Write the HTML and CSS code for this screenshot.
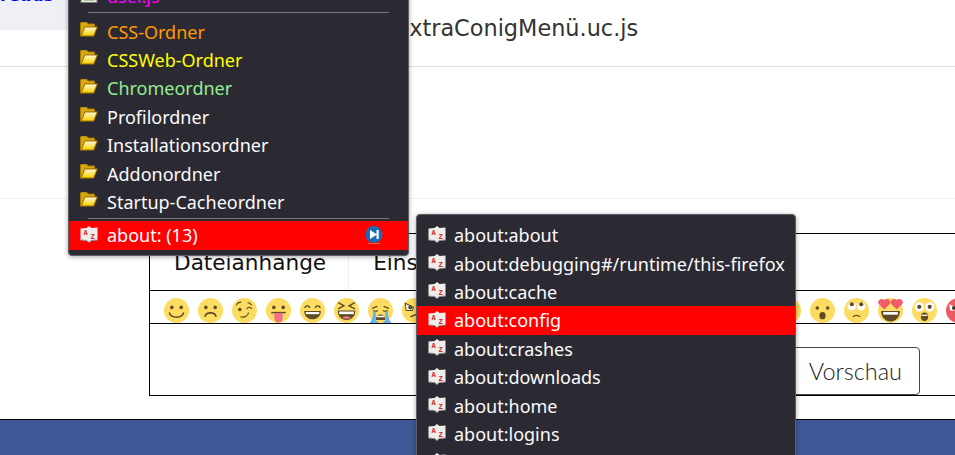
FILE: index.html
```html
<!DOCTYPE html>
<html lang="en">
<head>
    <meta charset="UTF-8">
    <meta name="viewport" content="width=device-width, initial-scale=1.0">
    <title>ExtraConigMenü.uc.js</title>
    <link rel="stylesheet" href="styles.css">
</head>
<body>
    <svg class="defs" width="0" height="0">
        <defs>
            <linearGradient id="fold" x1="0" y1="0" x2="0" y2="1">
                <stop offset="0" stop-color="#fff8d0"/>
                <stop offset="1" stop-color="#f9d000"/>
            </linearGradient>
            <symbol id="i-folder" viewBox="0 1 18 17">
                <path d="M.500 15V2L1.500 1h5l1.500 2h6.500v3H5L2 15z" fill="#d9a810" stroke="#a67900"/>
                <path d="M.500 15.500h13.500L18 5.500H4.500z" fill="#a67900"/>
                <path d="M2 14.500h11.300L16.500 6.500H5.200z" fill="url(#fold)"/>
            </symbol>
            <symbol id="i-book" viewBox="0 0 18 17">
                <path d="M.500 2.500l6-.5L9 0l2.500 2 6-.5v12.500l-6 .5L9 16.500l-2.500-2-6-.5z" fill="#eeedea"/>
                <path d="M.500 14l6 .5L9 16.500l2.500-2 6-.5" fill="none" stroke="#8f8f8f"/>
                <text x="5.500" y="8.500" class="az">A</text>
                <text x="12.500" y="12.500" class="az">Z</text>
            </symbol>
            <symbol id="i-script" viewBox="0 0 18 16">
                <rect x="1" y="1" width="16" height="14" fill="#f1f1e6" stroke="#777"/>
                <rect x="3.500" y="5" width="11" height="8" fill="#4f9a3c"/>
            </symbol>
            <symbol id="i-next" viewBox="0 0 18 18">
                <circle cx="9" cy="8.500" r="8.500" fill="#1c6cb5"/>
                <path d="M5 4l7 4.500-7 4.500z" fill="#fff"/>
                <rect x="11.500" y="4" width="2.200" height="9" fill="#fff"/>
                <rect x="3" y="17" width="12" height="1" fill="#e8604a"/>
            </symbol>

            <symbol id="e-smile" viewBox="0 0 24 24">
                <circle cx="12" cy="12" r="12" fill="#fddc62"/>
                <circle cx="7.500" cy="9" r="1.700" fill="#5f4b25"/>
                <circle cx="16.500" cy="9" r="1.700" fill="#5f4b25"/>
                <path d="M5 14c2 6 12 6 14 0" fill="none" stroke="#5f4b25" stroke-width="1.400"/>
            </symbol>
            <symbol id="e-frown" viewBox="0 0 24 24">
                <circle cx="12" cy="12" r="12" fill="#fddc62"/>
                <circle cx="7.500" cy="9" r="1.700" fill="#5f4b25"/>
                <circle cx="16.500" cy="9" r="1.700" fill="#5f4b25"/>
                <path d="M6.500 18c1.500-5 9.500-5 11 0" fill="none" stroke="#5f4b25" stroke-width="1.500"/>
            </symbol>
            <symbol id="e-wink" viewBox="0 0 24 24">
                <circle cx="12" cy="12" r="12" fill="#fddc62"/>
                <circle cx="7.500" cy="11" r="1.700" fill="#5f4b25"/>
                <path d="M14 10.500c1.500-2 4-2 5 0M4 7c1-2 3-3 5-3M15 4.500c2 0 3 1 4 2.500M8 18c3 1 7 0 8-4" fill="none" stroke="#5f4b25" stroke-width="1.100"/>
            </symbol>
            <symbol id="e-tongue" viewBox="0 0 24 24">
                <circle cx="12" cy="12" r="12" fill="#fddc62"/>
                <circle cx="7.500" cy="9" r="1.700" fill="#5f4b25"/>
                <circle cx="16.500" cy="9" r="1.700" fill="#5f4b25"/>
                <path d="M5 14h14" stroke="#5f4b25" stroke-width="1.400"/>
                <path d="M8 14.500h8v5a4 4 0 0 1-8 0z" fill="#f1708a"/>
            </symbol>
            <symbol id="e-grin" viewBox="0 0 24 24">
                <circle cx="12" cy="12" r="12" fill="#fddc62"/>
                <path d="M4.500 9.500c1-2.500 4-2.500 5 0M14.500 9.500c1-2.500 4-2.500 5 0" fill="none" stroke="#5f4b25" stroke-width="1.300"/>
                <path d="M4 12.500h16c0 5-3.500 8-8 8s-8-3-8-8z" fill="#5f4b25"/>
                <path d="M5.500 13.500h13v2h-13z" fill="#fff"/>
            </symbol>
            <symbol id="e-laugh" viewBox="0 0 24 24">
                <circle cx="12" cy="12" r="12" fill="#fddc62"/>
                <path d="M4 4.500l5.500 3-5.500 3M20 4.500l-5.500 3 5.500 3" fill="none" stroke="#5f4b25" stroke-width="1.400"/>
                <path d="M3.500 12h17c0 5.500-3.500 9-8.500 9s-8.500-3.500-8.500-9z" fill="#5f4b25"/>
                <path d="M5 13h14v2.500H5z" fill="#fff"/>
                <path d="M8 19c2-2 6-2 8 0-2 1.500-6 1.500-8 0z" fill="#f1708a"/>
            </symbol>
            <symbol id="e-cry" viewBox="0 0 24 24">
                <circle cx="12" cy="12" r="12" fill="#fddc62"/>
                <path d="M4 10l5-2M20 10l-5-2M5 12c1.500 1 3 1 4.500 0M14.500 12c1.500 1 3 1 4.500 0" fill="none" stroke="#5f4b25" stroke-width="1.200"/>
                <path d="M7.500 21c0-7 9-7 9 0z" fill="#5f4b25"/>
                <path d="M8.500 17h7v1.500h-7z" fill="#fff"/>
                <path d="M5 13h2.500v9H9.500L9.500 24H1.500c2-2 3.500-6 3.500-11zM16.500 13H19c0 5 1.500 9 3.500 11h-8l.5-2h1.500z" fill="#63b4ea"/>
            </symbol>
            <symbol id="e-grumpy" viewBox="0 0 24 24">
                <circle cx="12" cy="12" r="12" fill="#fddc62"/>
                <path d="M3 5l8 4-1 3H4z" fill="#fff" stroke="#5f4b25"/>
                <circle cx="8" cy="9" r="2" fill="#5f4b25"/>
                <path d="M14 11l6-3M8 18l8-3" fill="none" stroke="#5f4b25" stroke-width="1.400"/>
            </symbol>
            <symbol id="e-wow" viewBox="0 0 24 24">
                <circle cx="12" cy="12" r="12" fill="#fddc62"/>
                <circle cx="7" cy="9.500" r="1.700" fill="#5f4b25"/>
                <circle cx="17" cy="9.500" r="1.700" fill="#5f4b25"/>
                <ellipse cx="12" cy="17" rx="3" ry="3.500" fill="#5f4b25"/>
            </symbol>
            <symbol id="e-roll" viewBox="0 0 24 24">
                <circle cx="12" cy="12" r="12" fill="#fddc62"/>
                <circle cx="7.500" cy="8" r="4" fill="#fff"/>
                <circle cx="16.500" cy="8" r="4" fill="#fff"/>
                <circle cx="7.500" cy="6" r="2" fill="#5f4b25"/>
                <circle cx="16.500" cy="6" r="2" fill="#5f4b25"/>
                <path d="M8.500 18c2-1.500 5-1.500 7 0" fill="none" stroke="#5f4b25" stroke-width="1.300"/>
            </symbol>
            <symbol id="e-love" viewBox="0 0 24 24">
                <circle cx="12" cy="12" r="12" fill="#fddc62"/>
                <path d="M12 12.500h-9c0 6 4 10 9 10s9-4 9-10z" fill="#5f4b25"/>
                <path d="M5 13.500h14v2.500H5z" fill="#fff"/>
                <path d="M6 11L.500 5.500C-1 2 3.500-.5 6 2c2.500-2.500 7 0 5.500 3.500zM18 11l-5.500-5.500C11 2 15.500-.5 18 2c2.500-2.500 7 0 5.500 3.500z" fill="#f15b6c"/>
            </symbol>
            <symbol id="e-shock" viewBox="0 0 24 24">
                <circle cx="12" cy="12" r="12" fill="#fddc62"/>
                <circle cx="7" cy="8.500" r="4.500" fill="#fff"/>
                <circle cx="17" cy="8.500" r="4.500" fill="#fff"/>
                <circle cx="7" cy="8.500" r="2" fill="#5f4b25"/>
                <circle cx="17" cy="8.500" r="2" fill="#5f4b25"/>
                <ellipse cx="12" cy="18" rx="3.500" ry="4" fill="#5f4b25"/>
                <path d="M9 16h6v1.200H9z" fill="#fff"/>
            </symbol>
            <symbol id="e-angry" viewBox="0 0 24 24">
                <circle cx="12" cy="12" r="12" fill="#ef5a61"/>
                <path d="M3 6l7 3-1 3H4z" fill="#fff"/>
                <path d="M21 6l-7 3 1 3h5z" fill="#fff"/>
                <circle cx="7.500" cy="9.500" r="1.800" fill="#4b2b1f"/>
                <circle cx="16.500" cy="9.500" r="1.800" fill="#4b2b1f"/>
            </symbol>
        </defs>
    </svg>

    <div class="page">
        <header class="topbar">
            <nav class="crumb"><a href="#" class="crumb-link">reads</a></nav>
            <h1 class="thread-title">ExtraConigMenü.uc.js</h1>
        </header>

        <div class="post-rule"></div>

        <section class="editor">
            <div class="tabs">
                <div class="tab">Dateianhänge</div>
                <div class="tab">Einstellungen</div>
            </div>
            <div class="emoji-row">
                <svg class="emoji"><use href="#e-smile"/></svg>
                <svg class="emoji"><use href="#e-frown"/></svg>
                <svg class="emoji"><use href="#e-wink"/></svg>
                <svg class="emoji"><use href="#e-tongue"/></svg>
                <svg class="emoji"><use href="#e-grin"/></svg>
                <svg class="emoji"><use href="#e-laugh"/></svg>
                <svg class="emoji"><use href="#e-cry"/></svg>
                <svg class="emoji"><use href="#e-grumpy"/></svg>
                <svg class="emoji"><use href="#e-smile"/></svg>
                <svg class="emoji"><use href="#e-smile"/></svg>
                <svg class="emoji"><use href="#e-smile"/></svg>
                <svg class="emoji"><use href="#e-smile"/></svg>
                <svg class="emoji"><use href="#e-smile"/></svg>
                <svg class="emoji"><use href="#e-smile"/></svg>
                <svg class="emoji"><use href="#e-smile"/></svg>
                <svg class="emoji"><use href="#e-smile"/></svg>
                <svg class="emoji"><use href="#e-smile"/></svg>
                <svg class="emoji"><use href="#e-smile"/></svg>
                <svg class="emoji"><use href="#e-smile"/></svg>
                <svg class="emoji"><use href="#e-wow"/></svg>
                <svg class="emoji"><use href="#e-roll"/></svg>
                <svg class="emoji"><use href="#e-love"/></svg>
                <svg class="emoji"><use href="#e-shock"/></svg>
                <svg class="emoji"><use href="#e-angry"/></svg>
            </div>
            <div class="compose">
                <button class="preview-btn">Vorschau</button>
            </div>
        </section>

        <footer class="footer"></footer>

        <!-- the popup menus lie over the page -->
        <div class="menu menu-main">
            <div class="item item-user"><svg class="icon"><use href="#i-script"/></svg>user.js</div>
            <div class="sep"></div>
            <div class="item item-css"><svg class="icon"><use href="#i-folder"/></svg>CSS-Ordner</div>
            <div class="item item-cssweb"><svg class="icon"><use href="#i-folder"/></svg>CSSWeb-Ordner</div>
            <div class="item item-chrome"><svg class="icon"><use href="#i-folder"/></svg>Chromeordner</div>
            <div class="item"><svg class="icon"><use href="#i-folder"/></svg>Profilordner</div>
            <div class="item"><svg class="icon"><use href="#i-folder"/></svg>Installationsordner</div>
            <div class="item"><svg class="icon"><use href="#i-folder"/></svg>Addonordner</div>
            <div class="item"><svg class="icon"><use href="#i-folder"/></svg>Startup-Cacheordner</div>
            <div class="sep"></div>
            <div class="item active"><svg class="icon"><use href="#i-book"/></svg>about: (13)<svg class="arrow"><use href="#i-next"/></svg></div>
        </div>

        <div class="menu menu-about">
            <div class="item"><svg class="icon"><use href="#i-book"/></svg>about:about</div>
            <div class="item"><svg class="icon"><use href="#i-book"/></svg>about:debugging#/runtime/this-firefox</div>
            <div class="item"><svg class="icon"><use href="#i-book"/></svg>about:cache</div>
            <div class="item active"><svg class="icon"><use href="#i-book"/></svg>about:config</div>
            <div class="item"><svg class="icon"><use href="#i-book"/></svg>about:crashes</div>
            <div class="item"><svg class="icon"><use href="#i-book"/></svg>about:downloads</div>
            <div class="item"><svg class="icon"><use href="#i-book"/></svg>about:home</div>
            <div class="item"><svg class="icon"><use href="#i-book"/></svg>about:logins</div>
            <div class="item"><svg class="icon"><use href="#i-book"/></svg>about:memory</div>
        </div>
    </div>
</body>
</html>
```

FILE: styles.css
```css
body{
    margin: 0;
    background-color: white;
    font-family: "DejaVu Sans", sans-serif;
}

.defs{
    display: block;
    height: 0;
}

.page{
    width: 955px;
    height: 455px;
    position: relative;
    overflow: hidden;
    display: flex;
    flex-direction: column;
}

/* top of the thread */
.topbar{
    height: 66px;
    flex: none;
    display: flex;
    align-items: flex-start;
    border-bottom: 1px solid #dedede;
}

.crumb{
    width: 100px;
    height: 30px;
    flex: none;
    background-color: #eff0f6;
    overflow: hidden;
}

.crumb-link{
    display: block;
    margin-top: -15px;
    color: #0000ff;
    font-size: 17px;
    font-weight: bold;
    line-height: 20px;
    text-decoration: none;
}

.thread-title{
    margin: 15px 0 0 295px;
    font-size: 22.4px;
    font-weight: normal;
    line-height: 26px;
    color: #333;
    white-space: nowrap;
}

.post-rule{
    height: 1px;
    flex: none;
    margin-top: 131px;
    background-color: #f0f0f8;
}

/* reply box */
.editor{
    width: 900px;
    height: 163px;
    flex: none;
    margin: 34px 0 0 149px;
    border: 1px solid black;
    box-sizing: border-box;
}

.tabs{
    height: 56px;
    display: flex;
    border-bottom: 1px solid black;
}

.tab{
    padding: 16px 22px 0 24px;
    font-size: 21.6px;
    line-height: 26px;
    color: #111;
    border-right: 1px solid #eeeeee;
}

.emoji-row{
    height: 25px;
    display: flex;
    gap: 9px;
    padding: 7px 0 0 14px;
    border-bottom: 1px solid black;
}

.emoji{
    width: 25px;
    height: 25px;
    flex: none;
}

.compose{
    display: flex;
    justify-content: flex-end;
    padding: 23px 128px 0 0;
}

.preview-btn{
    height: 48px;
    padding: 0 17px;
    background-color: white;
    border: 1px solid #444;
    border-radius: 4px;
    font-family: "Lato", sans-serif;
    font-size: 23.5px;
    font-weight: 300;
    color: #222;
}

.footer{
    margin-top: auto;
    height: 35px;
    flex: none;
    background-color: #3f5896;
    border-top: 1px solid black;
}

/* popup menus */
.menu{
    position: absolute;
    box-sizing: border-box;
    background-color: #2b2a33;
    border: 1px solid #5e5e66;
    border-radius: 4px;
    box-shadow: 0 1px 5px rgba(0,0,0,0.35);
    font-family: "Noto Sans", sans-serif;
    font-size: 18px;
    color: #fbfbfe;
}

.menu-main{
    left: 68px;
    top: -19px;
    width: 341px;
    padding-bottom: 5px;
}

.menu-about{
    left: 416px;
    top: 214px;
    width: 380px;
    padding-top: 6px;
}

.item{
    height: 28.4px;
    display: flex;
    align-items: center;
    gap: 9px;
    padding-left: 11px;
    white-space: nowrap;
}

.menu-about .item{
    gap: 8px;
}

.item.active{
    background-color: red;
    color: white;
}

.item-user{
    color: #ff00ff;
}

.item-css{
    color: #ff9900;
}

.item-cssweb{
    color: #ffff00;
}

.item-chrome{
    color: #90ee90;
}

.icon{
    width: 18px;
    height: 17px;
    flex: none;
    margin-top: -2px;
}

.az{
    font-family: "DejaVu Sans Mono", monospace;
    font-size: 7px;
    font-weight: bold;
    fill: #d42020;
    text-anchor: middle;
}

.arrow{
    width: 18px;
    height: 18px;
    flex: none;
    margin-left: auto;
    margin-right: 25px;
}

.sep{
    height: 1px;
    margin: 2px 19px;
    background-color: #77777c;
}

.item-user + .sep{
    margin-bottom: 4px;
}
```
